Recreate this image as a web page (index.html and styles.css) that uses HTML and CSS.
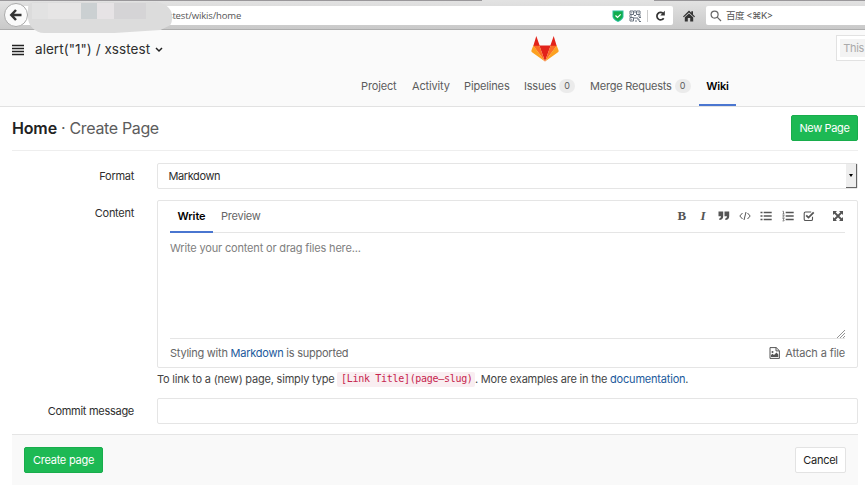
FILE: index.html
```html
<!DOCTYPE html>
<html lang="en">
<head>
<meta charset="utf-8">
<title>Create Page · Wiki</title>
<link rel="stylesheet" href="styles.css">
</head>
<body>
<div class="browser">
  <div class="url">
    <span class="url-text">stest/wikis/home</span>
    <svg class="shield" width="12" height="12" viewBox="0 0 12 12"><path d="M.5.5H11.500V7Q10.500 10 6 12Q1.500 10 .5 7Z" fill="#2cc0a0"/><path d="M1.500 1.500h9V7Q9.500 9.500 6 11Q2.500 9.500 1.500 7z" fill="#12ac4c"/><path d="M3.500 5.500l2 2 3.200-3.200" fill="none" stroke="#fff" stroke-width="1.200"/></svg>
    <svg class="qr" width="12" height="12" viewBox="0 0 12 12" fill="none" stroke="#68727e"><path d="M1 1h3.500v3.500H1zM7.500 1H11v3.500H7.500zM1 7.500h3.500V11H1z"/><path d="M2.200 2.800h1M8.700 2.800h1M2.200 9.300h1M6 0v3M5 5.500h2M0 6h3M9 6h3M6 7v2M7 8h2v2h2M6 11h2M10 7.500h2M10 11.500h2" /></svg>
    <i class="url-sep"></i>
    <svg width="11" height="12" viewBox="0 0 11 12"><path d="M8.700 8.200A3.700 3.700 0 1 1 8 3.300" fill="none" stroke="#333" stroke-width="1.700"/><path d="M9.800.8v4.700H5.300z" fill="#333"/></svg>
  </div>
  <svg class="home" width="12" height="12" viewBox="0 0 12 12"><path d="M6 .5l2.300 2.200V1.200H10v3.200l2 2-.8.800L6 2.500.8 7.200 0 6.400z" fill="#333"/><path d="M1.800 7.200L6 3.500l4.200 3.700V11.500H7.200V8H4.800v3.500h-3z" fill="#333"/></svg>
  <div class="search">
    <svg width="12" height="12" viewBox="0 0 12 12" fill="none" stroke="#666" stroke-width="1.200"><circle cx="4.600" cy="4.600" r="3.500"/><path d="M7.200 7.200l3.800 3.800"/></svg>
    <span>百度 &lt;⌘K&gt;</span>
  </div>
  <div class="back"><svg width="14" height="12" viewBox="0 0 14 12" fill="none" stroke="#333" stroke-width="2.500"><path d="M7 1L2.300 6 7 11M2.300 6h10.200"/></svg></div>
  <div class="tab-edge"></div>
  <div class="smudge"><i class="s1"></i><i class="s2"></i><i class="s3"></i><i class="s4"></i><i class="s5"></i></div>
</div>
<header>
  <div class="top">
    <svg class="menu" width="12" height="12" viewBox="0 0 12 12"><path d="M0 1.500h12M0 4.500h12M0 7.500h12M0 10.500h12" stroke="#222" stroke-width="1.700"/></svg>
    <span class="project">alert("1") / xsstest</span>
    <svg class="chev" width="8" height="6" viewBox="0 0 8 6"><path d="M1 1l3 3 3-3" fill="none" stroke="#222" stroke-width="1.500"/></svg>
    <svg class="logo" width="28" height="26" viewBox="0 0 28 26"><path d="M5.300 0L2.300 10h6.500zM22.700 0l-3.500 10h6.500z" fill="#e2231a"/><path d="M14 25.500L8.300 9.500h11.400z" fill="#e2231a"/><path d="M14 25.500L8.500 9.800H2.200zM14 25.500l5.500-15.700h6.300z" fill="#fc6d26"/><path d="M2.300 9.500L.4 14.500q-.3 1 .6 1.700L14 25.500zM25.700 9.500l1.900 5q.3 1-.6 1.700L14 25.500z" fill="#fca121"/></svg>
    <div class="site-search"><span>This</span></div>
  </div>
  <nav>
    <a class="n1">Project</a><a class="n2">Activity</a><a class="n3">Pipelines</a><a class="n4">Issues<b>0</b></a><a class="n5">Merge Requests<b>0</b></a><a class="active">Wiki</a>
  </nav>
</header>
<main>
  <div class="title"><h1><strong>Home</strong> · Create Page</h1><button class="btn green new">New Page</button></div>
  <div class="row format"><label>Format</label><div class="select"><span>Markdown</span><i class="drop"></i></div></div>
  <div class="row content"><label>Content</label>
    <div class="editor">
      <div class="tabs"><span class="write">Write</span><span class="preview">Preview</span>
        <div class="tools">
          <span class="serif bold">B</span><span class="serif ital">I</span>
          <svg width="12" height="12" viewBox="0 0 12 12" fill="#555"><path d="M.5 1.500h4.700v4.800Q5.200 10 1.300 10V8.500Q3 8.300 3 6.300H.5zM6.500 1.500h4.700v4.800Q11.200 10 7.300 10V8.500Q9 8.300 9 6.300H6.500z"/></svg>
          <svg width="12" height="12" viewBox="0 0 12 12" fill="none" stroke="#555"><path d="M3.500 3L.8 6l2.700 3M8.500 3l2.700 3-2.700 3M7 2L5 10"/></svg>
          <svg width="12" height="12" viewBox="0 0 12 12" stroke="#555" stroke-width="1.700"><path d="M.5 2.500h2M.5 6h2M.5 9.500h2M3.700 2.500h8M3.700 6h8M3.700 9.500h8"/></svg>
          <svg width="12" height="12" viewBox="0 0 12 12" fill="none" stroke="#555"><path d="M3.700 2.500h8M3.700 6h8M3.700 9.500h8" stroke-width="1.600"/><path d="M.5 1.300h1V4M.5 4h2M.5 5.300h1.700L.7 7.200h1.800M.5 8.500h1.700L1.400 9.700q1 .2.700 1.200H.5" stroke-width=".7"/></svg>
          <svg width="12" height="12" viewBox="0 0 12 12" fill="none" stroke="#555"><path d="M9.500 6.800v2.400q0 1.300-1.300 1.300H2.500q-1.300 0-1.300-1.300V3.300Q1.200 2 2.500 2h5.700" stroke-width="1.100"/><path d="M3.200 5.300L5.500 7.600 10.700 2.400" stroke-width="1.800"/></svg>
          <svg class="full" width="12" height="12" viewBox="0 0 12 12" fill="#555"><path d="M1 1h4L1 5zM11 1v4L7 1zM1 11V7l4 4zM11 11H7l4-4z"/><path d="M2.500 2.500l7 7M9.500 2.500l-7 7" stroke="#555" stroke-width="1.800"/></svg>
        </div>
      </div>
      <div class="area"><span>Write your content or drag files here...</span><svg width="8" height="8" viewBox="0 0 8 8" stroke="#777" stroke-width=".8"><path d="M0 8l8-8M3 8l5-5M6 8l2-2"/></svg></div>
      <div class="foot"><span class="styling">Styling with <a>Markdown</a> is supported</span>
        <span class="attach"><svg width="11" height="12" viewBox="0 0 11 12"><path d="M1 .6h6.200L10.400 3.700v7.700H1zM7 .6v3.300h3.400" fill="none" stroke="#555"/><path d="M2 10V8l1.500-1.300L5 8l2.500-2.500L9.300 7.500V10z" fill="#555"/><circle cx="3.500" cy="5" r="1" fill="#555"/></svg><em>Attach a file</em></span></div>
    </div>
  </div>
  <p class="help"><span class="h1">To link to a (new) page, simply type</span><code>[Link Title](page–slug)</code><span class="h2">. More examples are in the <a>documentation</a>.</span></p>
  <div class="row commit"><label>Commit message</label><div class="input"></div></div>
  <div class="actions"><button class="btn green create">Create page</button><button class="btn cancel">Cancel</button></div>
</main>
</body>
</html>
```
FILE: styles.css
```css
* { box-sizing: border-box; }
body { margin: 0; width: 865px; height: 494px; overflow: hidden; background: #fff; font: 11px/16px Inter, "Noto Sans CJK SC", sans-serif; letter-spacing: -.24px; color: #2e2e2e; }
svg { display: block; flex: none; }
a { color: #1b5a9c; }

.browser { position: relative; height: 30px; display: flex; align-items: flex-start; padding: 6px 0 0 20px; background: linear-gradient(#e2e2e2, #c9c9c9); border-top: 1px solid #99979a; border-bottom: 1px solid #adadad; }
.browser > .url, .browser > .search { margin-top: -1px; height: 19px; background: #fff; display: flex; align-items: center; }
.url { width: 653px; border-radius: 0 2px 2px 0; padding-right: 8px; }
.url-text { width: 444px; margin-left: 148px; flex: none; font: 9.5px/19px "Open Sans", sans-serif; letter-spacing: -.15px; color: #555; }
.shield { margin-right: 5px; }
.url-sep { width: 1px; height: 12px; background: #ccc; margin: 0 7px 0 6px; flex: none; }
.home { margin: 3px 11px 0 10px; }
.search { width: 160px; border-radius: 2px 0 0 2px; padding-left: 4px; gap: 4px; font-size: 9.5px; color: #555; }
.search span { letter-spacing: -.5px; padding-top: 1px; }
.back { position: absolute; left: 4px; top: 2px; width: 24px; height: 24px; border: 1px solid #aaa; border-radius: 50%; background: #fafafa; display: flex; align-items: center; justify-content: center; }
.tab-edge { position: absolute; left: 12px; top: -1px; width: 642px; height: 1px; background: linear-gradient(90deg, #99979a 470px, #e2e2e2 470px); }
.smudge { position: absolute; left: 28px; top: 1px; width: 144px; height: 31px; overflow: hidden; background: #dcdcdc; border-radius: 6px 18px 18px 16px / 6px 14px 14px 16px; clip-path: polygon(0 0, 100% 0, 100% 72%, 92% 90%, 60% 100%, 0 100%); }
.smudge i { position: absolute; top: 1px; height: 16px; }
.s1 { left: 4px; width: 16px; background: #e2e2e2; }
.s2 { left: 20px; width: 33px; background: #e6e5e5; }
.s3 { left: 53px; width: 16px; background: #cbd0d2; }
.s4 { left: 69px; width: 17px; background: #e6e3e5; }
.s5 { left: 86px; width: 32px; background: #d5d4d6; }

header { height: 77px; background: #fafafa; border-bottom: 1px solid #e2e2e2; }
.top { height: 39px; display: flex; align-items: center; padding-left: 12px; }
.project { margin: -2px 0 0 11px; width: 117px; white-space: nowrap; font-size: 13.5px; letter-spacing: .05px; }
.chev { margin-left: 5px; }
.logo { margin: -2px 0 0 368px; }
.site-search { width: 31px; height: 26px; margin: -3px -1px 0 277px; border: 1px solid #e2e2e2; background: #fff; padding: 3px 0 3px 3px; }
.site-search span { display: block; background: #f3f3f3; padding-left: 3px; line-height: 18px; letter-spacing: -.3px; color: #aaa; }
nav { display: flex; height: 37px; padding-left: 361px; }
nav a { display: flex; height: 37px; padding-top: 9px; color: #5c5c5c; white-space: nowrap; letter-spacing: -.15px; }
.n1 { width: 51px; }
.n2 { width: 52px; }
.n3 { width: 60px; }
.n4 { width: 66px; letter-spacing: -.2px; }
.n5 { width: 109px; letter-spacing: -.22px; }
nav b { width: 16px; height: 14px; margin: 1px 0 0 3px; border-radius: 8px; background: #ebebeb; font: 9px/14px Inter, sans-serif; text-align: center; }
nav .active { width: 37px; justify-content: center; font-weight: 600; color: #000; border-bottom: 2px solid #4a76d0; }

main { padding: 0 7px 0 12px; }
.title { height: 44px; display: flex; justify-content: space-between; align-items: center; border-bottom: 1px solid #eee; }
h1 { margin: -1px 0 0; font-size: 16px; font-weight: 400; letter-spacing: -.35px; color: #5c5c5c; }
h1 strong { font-weight: 600; letter-spacing: -.15px; color: #222; }
.btn { height: 26px; padding: 0; border: 1px solid #e3e3e3; border-radius: 2px; font: 11px/16px Inter, sans-serif; letter-spacing: -.25px; white-space: nowrap; }
.green { background: #1db954; border-color: #18ad4c; color: #fff; }
.new { width: 67px; margin-top: -1px; letter-spacing: -.35px; }
.row { display: flex; }
label { width: 122px; margin-right: 23px; flex: none; text-align: right; letter-spacing: -.28px; }
.format { margin-top: 12px; height: 26px; line-height: 26px; }
.select, .input { flex: 1; height: 26px; border: 1px solid #e5e5e5; border-radius: 2px; background: #fff; }
.select { display: flex; justify-content: space-between; line-height: 25px; padding-left: 10.5px; letter-spacing: -.4px; }
.drop { width: 11px; height: 24px; background: #eee; border: solid #666; border-width: 0 1px 1px 0; display: flex; align-items: center; justify-content: center; }
.drop::after { content: ""; border: 2.5px solid transparent; border-top: 3px solid #000; border-bottom: 0; }
.content { margin-top: 11px; }
.content label { padding-top: 5px; }
.editor { flex: 1; height: 168px; border: 1px solid #e5e5e5; border-radius: 2px; padding: 0 12px; }
.tabs { height: 32px; display: flex; line-height: 31px; border-bottom: 1px solid #e5e5e5; }
.write { width: 43px; height: 32px; text-align: center; font-weight: 600; letter-spacing: -.1px; color: #000; border-bottom: 2px solid #4a76d0; }
.preview { margin-left: 8px; color: #666; }
.tools { margin-left: auto; display: flex; align-items: center; gap: 9.2px; height: 30px; color: #555; }
.serif { font: 13px/16px "Liberation Serif", serif; width: 12px; text-align: center; }
.bold { font-weight: 700; }
.ital { font-style: italic; font-weight: 700; }
.full { margin: 0 1px 0 8px; }
.area { height: 106px; display: flex; justify-content: space-between; padding-top: 7px; border-bottom: 1px solid #e5e5e5; letter-spacing: -.17px; color: #808080; }
.area svg { align-self: flex-end; }
.foot { display: flex; justify-content: space-between; align-items: center; height: 28px; color: #666; white-space: nowrap; }
.attach { display: flex; align-items: center; gap: 5px; letter-spacing: -.13px; }
em { font-style: normal; }
.help { margin: 3px 0 0 145px; height: 17px; display: flex; white-space: nowrap; color: #444; }
.help .h1 { width: 180px; letter-spacing: -.2px; }
.help code { width: 138px; height: 15px; margin-top: 1px; padding-left: 4px; border-radius: 2px; background: #f9eef1; color: #c7254e; font: 10px/14px "DejaVu Sans Mono", monospace; letter-spacing: -.3px; }
.help .h2 { letter-spacing: -.2px; }
.commit { margin-top: 10px; line-height: 26px; }
.actions { margin-top: 10px; height: 51px; display: flex; justify-content: space-between; align-items: center; padding: 0 12px; background: #f9f9f9; border-top: 1px solid #e5e5e5; }
.create { width: 79px; }
.cancel { width: 51px; background: #fff; color: #222; }
```
